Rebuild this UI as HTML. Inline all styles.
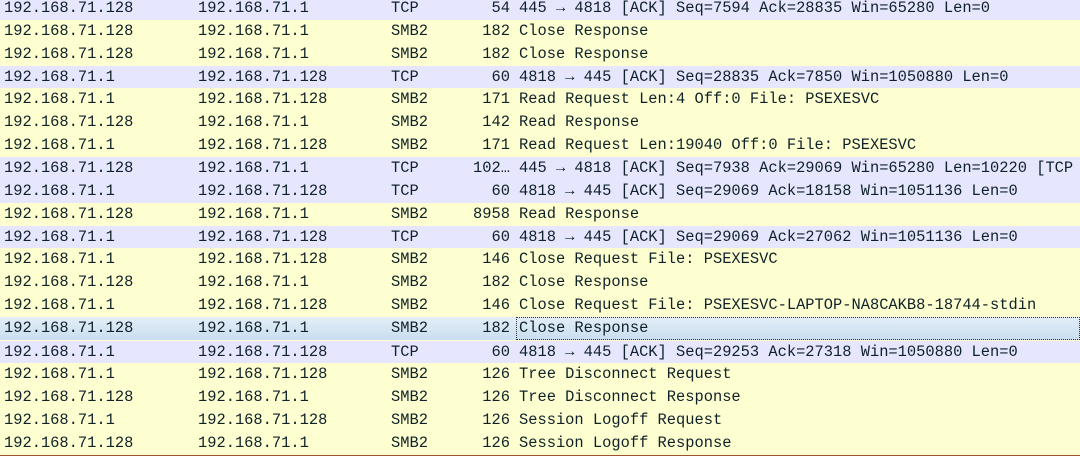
<!DOCTYPE html>
<html><head><meta charset="utf-8"><style>
body{margin:0;width:1080px;height:456px;overflow:hidden;background:#feffd0;font-family:"Liberation Mono","DejaVu Sans Mono",monospace;font-size:15.4px;color:#0f2229;position:relative}
.r{position:absolute;left:0;width:1080px;height:23px;line-height:23px;white-space:pre}
.t{background:#e7e6ff}.s{background:#feffd0}
.sel{background:linear-gradient(#e4eef8,#c9def0);}
.r span{position:absolute;top:0}
.a{left:4px}.b{left:198px}.c{left:391px}.d{right:570px;text-align:right}.e{left:519px}
.sel .e{border:1px dotted #333;top:0;height:21px;line-height:21px;left:516px;right:0;padding-left:2px}
.bl{position:absolute;left:0;bottom:0;width:1080px;height:1px;background:#a0522d}
</style></head><body>
<div class="r t" style="top:-3px"><span class="a">192.168.71.128</span><span class="b">192.168.71.1</span><span class="c">TCP</span><span class="d">54</span><span class="e">445 → 4818 [ACK] Seq=7594 Ack=28835 Win=65280 Len=0</span></div>
<div class="r s" style="top:20px"><span class="a">192.168.71.128</span><span class="b">192.168.71.1</span><span class="c">SMB2</span><span class="d">182</span><span class="e">Close Response</span></div>
<div class="r s" style="top:42.5px"><span class="a">192.168.71.128</span><span class="b">192.168.71.1</span><span class="c">SMB2</span><span class="d">182</span><span class="e">Close Response</span></div>
<div class="r t" style="top:65.5px"><span class="a">192.168.71.1</span><span class="b">192.168.71.128</span><span class="c">TCP</span><span class="d">60</span><span class="e">4818 → 445 [ACK] Seq=28835 Ack=7850 Win=1050880 Len=0</span></div>
<div class="r s" style="top:88.4px"><span class="a">192.168.71.1</span><span class="b">192.168.71.128</span><span class="c">SMB2</span><span class="d">171</span><span class="e">Read Request Len:4 Off:0 File: PSEXESVC</span></div>
<div class="r s" style="top:111.2px"><span class="a">192.168.71.128</span><span class="b">192.168.71.1</span><span class="c">SMB2</span><span class="d">142</span><span class="e">Read Response</span></div>
<div class="r s" style="top:134px"><span class="a">192.168.71.1</span><span class="b">192.168.71.128</span><span class="c">SMB2</span><span class="d">171</span><span class="e">Read Request Len:19040 Off:0 File: PSEXESVC</span></div>
<div class="r t" style="top:157px"><span class="a">192.168.71.128</span><span class="b">192.168.71.1</span><span class="c">TCP</span><span class="d">102…</span><span class="e">445 → 4818 [ACK] Seq=7938 Ack=29069 Win=65280 Len=10220 [TCP</span></div>
<div class="r t" style="top:179.8px"><span class="a">192.168.71.1</span><span class="b">192.168.71.128</span><span class="c">TCP</span><span class="d">60</span><span class="e">4818 → 445 [ACK] Seq=29069 Ack=18158 Win=1051136 Len=0</span></div>
<div class="r s" style="top:202.6px"><span class="a">192.168.71.128</span><span class="b">192.168.71.1</span><span class="c">SMB2</span><span class="d">8958</span><span class="e">Read Response</span></div>
<div class="r t" style="top:225.5px"><span class="a">192.168.71.1</span><span class="b">192.168.71.128</span><span class="c">TCP</span><span class="d">60</span><span class="e">4818 → 445 [ACK] Seq=29069 Ack=27062 Win=1051136 Len=0</span></div>
<div class="r s" style="top:248.3px"><span class="a">192.168.71.1</span><span class="b">192.168.71.128</span><span class="c">SMB2</span><span class="d">146</span><span class="e">Close Request File: PSEXESVC</span></div>
<div class="r s" style="top:271.2px"><span class="a">192.168.71.128</span><span class="b">192.168.71.1</span><span class="c">SMB2</span><span class="d">182</span><span class="e">Close Response</span></div>
<div class="r s" style="top:294px"><span class="a">192.168.71.1</span><span class="b">192.168.71.128</span><span class="c">SMB2</span><span class="d">146</span><span class="e">Close Request File: PSEXESVC-LAPTOP-NA8CAKB8-18744-stdin</span></div>
<div class="r sel" style="top:317px"><span class="a">192.168.71.128</span><span class="b">192.168.71.1</span><span class="c">SMB2</span><span class="d">182</span><span class="e">Close Response</span></div>
<div class="r t" style="top:340.5px"><span class="a">192.168.71.1</span><span class="b">192.168.71.128</span><span class="c">TCP</span><span class="d">60</span><span class="e">4818 → 445 [ACK] Seq=29253 Ack=27318 Win=1050880 Len=0</span></div>
<div class="r s" style="top:363.3px"><span class="a">192.168.71.1</span><span class="b">192.168.71.128</span><span class="c">SMB2</span><span class="d">126</span><span class="e">Tree Disconnect Request</span></div>
<div class="r s" style="top:386.1px"><span class="a">192.168.71.128</span><span class="b">192.168.71.1</span><span class="c">SMB2</span><span class="d">126</span><span class="e">Tree Disconnect Response</span></div>
<div class="r s" style="top:409px"><span class="a">192.168.71.1</span><span class="b">192.168.71.128</span><span class="c">SMB2</span><span class="d">126</span><span class="e">Session Logoff Request</span></div>
<div class="r s" style="top:431.8px"><span class="a">192.168.71.128</span><span class="b">192.168.71.1</span><span class="c">SMB2</span><span class="d">126</span><span class="e">Session Logoff Response</span></div>
<div class="bl"></div>
</body></html>
